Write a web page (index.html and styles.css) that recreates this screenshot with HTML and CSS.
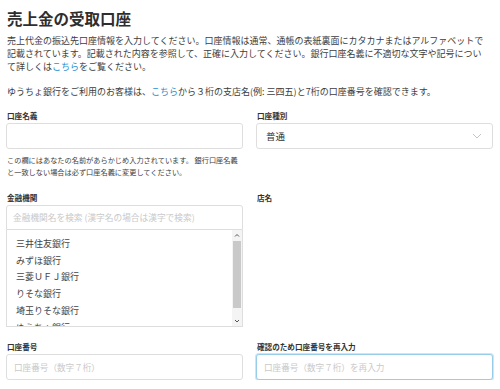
FILE: index.html
```html
<!DOCTYPE html>
<html lang="ja">
<head>
<meta charset="utf-8">
<title>売上金の受取口座</title>
<link rel="stylesheet" href="styles.css">
</head>
<body>
<main class="page">
  <h1 class="title">売上金の受取口座</h1>
  <p class="intro">売上代金の振込先口座情報を入力してください。口座情報は通常、通帳の表紙裏面にカタカナまたはアルファベットで<br>記載されています。記載された内容を参照して、正確に入力してください。銀行口座名義に不適切な文字や記号につい<br>て詳しくは<a class="link">こちら</a>をご覧ください。</p>
  <p class="intro intro-second">ゆうちょ銀行をご利用のお客様は、<a class="link">こちら</a>から３桁の支店名(例: 三四五)と7桁の口座番号を確認できます。</p>

  <div class="form">
    <div class="field">
      <label class="label">口座名義</label>
      <input class="control" type="text">
      <p class="help">この欄にはあなたの名前があらかじめ入力されています。 銀行口座名義<br>と一致しない場合は必ず口座名義に変更してください。</p>
    </div>
    <div class="field">
      <label class="label">口座種別</label>
      <div class="control select">
        <span>普通</span>
        <svg class="chevron" width="10" height="6" viewBox="0 0 10 6"><path d="M1 1 L5 5 L9 1" fill="none" stroke="#c4c4c4" stroke-width="1"/></svg>
      </div>
    </div>

    <div class="field">
      <label class="label">金融機関</label>
      <input class="control search" type="text" placeholder="金融機関名を検索 (漢字名の場合は漢字で検索)">
      <div class="listbox">
        <ul class="options">
          <li>三井住友銀行</li>
          <li>みずほ銀行</li>
          <li>三菱ＵＦＪ銀行</li>
          <li>りそな銀行</li>
          <li>埼玉りそな銀行</li>
          <li>ゆうちょ銀行</li>
        </ul>
        <div class="scrollbar">
          <svg class="arrow" width="10" height="11" viewBox="0 0 10 11"><path d="M3 6.5 L5 4.5 L7 6.5" fill="none" stroke="#555" stroke-width="1"/></svg>
          <div class="track"><div class="thumb"></div></div>
          <svg class="arrow" width="10" height="12" viewBox="0 0 10 12"><path d="M3 5 L5 7 L7 5" fill="none" stroke="#555" stroke-width="1"/></svg>
        </div>
      </div>
    </div>
    <div class="field">
      <label class="label">店名</label>
    </div>

    <div class="field">
      <label class="label">口座番号</label>
      <input class="control num" type="text" placeholder="口座番号（数字７桁）">
    </div>
    <div class="field">
      <label class="label">確認のため口座番号を再入力</label>
      <input class="control num focus" type="text" placeholder="口座番号（数字７桁）を再入力">
    </div>
  </div>
</main>
</body>
</html>
```

FILE: styles.css
```css
* { box-sizing: border-box; }

body {
  margin: 0;
  background: #fff;
  color: #444;
  font-family: "Noto Sans CJK JP", "Noto Sans", sans-serif;
}

.page {
  padding: 9px 7px 0 6px;
}

.title {
  margin: 0 0 0 1px;
  font-size: 15.5px;
  line-height: 18px;
  font-weight: bold;
  color: #2e2e2e;
}

.intro {
  margin: 6.5px 0 0 1px;
  font-size: 9px;
  line-height: 13px;
  color: #3d3d3d;
}

.intro-second {
  margin-top: 12px;
}

.link {
  color: #1f8fd2;
  text-decoration: none;
}

.form {
  display: grid;
  grid-template-columns: 1fr 1fr;
  column-gap: 13px;
  row-gap: 14px;
  margin-top: 12.5px;
  align-items: start;
}

.field {
  display: flex;
  flex-direction: column;
}

.label {
  display: block;
  margin: 0 0 1px 1px;
  font-size: 7.6px;
  line-height: 12px;
  font-weight: bold;
  color: #333;
}

.control {
  display: block;
  width: 100%;
  height: 26px;
  margin: 0;
  border: 1px solid #dedede;
  border-radius: 3px;
  background: #fff;
  font-family: inherit;
  font-size: 9px;
  color: #333;
  outline: none;
}

.control::placeholder {
  color: #c9c9c9;
}

.select {
  display: flex;
  align-items: center;
  justify-content: space-between;
  padding: 0 10px 0 9px;
  font-size: 9.5px;
  color: #333;
}

.help {
  margin: 5px 0 0 1px;
  font-size: 7.2px;
  line-height: 12px;
  color: #3d3d3d;
}

.search {
  height: 25px;
  padding: 0 6px;
  font-size: 8.7px;
  border-radius: 3px 3px 0 0;
}

.listbox {
  display: flex;
  height: 97px;
  border: 1px solid #dedede;
  border-top: none;
  overflow: hidden;
}

.options {
  flex: 1;
  margin: 0;
  padding: 6px 0 0 9px;
  list-style: none;
  overflow: hidden;
  font-size: 9px;
  line-height: 16.7px;
  color: #444;
}

.scrollbar {
  width: 10px;
  display: flex;
  flex-direction: column;
  background: #f4f4f4;
}

.arrow {
  display: block;
  flex: none;
}

.track {
  flex: 1;
  padding: 0 0 7px;
}

.thumb {
  height: 67px;
  margin: 0 1px;
  background: #c9c9c9;
}

.num {
  padding: 0 7px;
  font-size: 8.6px;
}

.focus {
  border-color: #98cde9;
  box-shadow: 0 0 0 1px #cbe6f4;
}
```
